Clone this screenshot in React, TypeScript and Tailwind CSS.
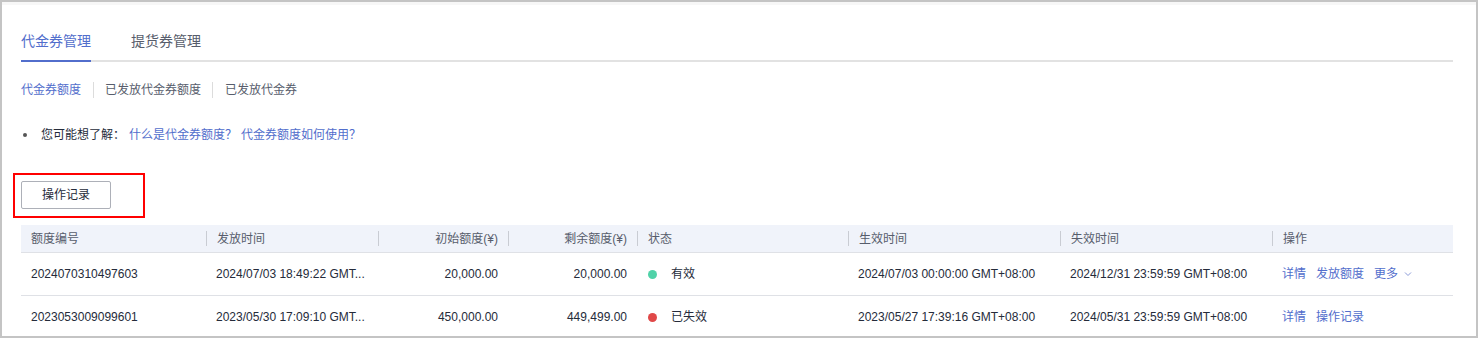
import React from "react";

type Row = {
  id: string;
  issued: string;
  initial: string;
  remain: string;
  status: "ok" | "expired";
  start: string;
  end: string;
  actions: string[];
  more?: boolean;
};

const rows: Row[] = [
  {
    id: "2024070310497603",
    issued: "2024/07/03 18:49:22 GMT...",
    initial: "20,000.00",
    remain: "20,000.00",
    status: "ok",
    start: "2024/07/03 00:00:00 GMT+08:00",
    end: "2024/12/31 23:59:59 GMT+08:00",
    actions: ["详情", "发放额度"],
    more: true,
  },
  {
    id: "2023053009099601",
    issued: "2023/05/30 17:09:10 GMT...",
    initial: "450,000.00",
    remain: "449,499.00",
    status: "expired",
    start: "2023/05/27 17:39:16 GMT+08:00",
    end: "2024/05/31 23:59:59 GMT+08:00",
    actions: ["详情", "操作记录"],
  },
];

// column widths in px, last one takes the rest
const cols = "grid-cols-[185px_172px_130px_129px_211px_212px_212px_1fr]";

function HeadCell({ children, right, sep = true }: { children: React.ReactNode; right?: boolean; sep?: boolean }) {
  return (
    <div className={`flex items-center h-full px-[10px] ${right ? "justify-end" : ""}`}>
      {sep && <span className="w-px h-[15px] bg-[#c9ccd3] -ml-[10px] mr-[10px] shrink-0" />}
      <span className={right ? "ml-auto" : ""}>{children}</span>
    </div>
  );
}

export default function App() {
  return (
    <div
      className="w-[1478px] h-[338px] bg-[#c4c4c4] p-[2px] overflow-hidden"
      style={{ fontFamily: '"Liberation Sans", "Noto Sans CJK SC", sans-serif' }}
    >
      <div className="bg-white h-full border-t-[3px] border-[#f7f7f7] pl-[19px] pr-[23px] text-[12px] text-[#333]">
        {/* main tabs */}
        <div className="flex gap-[40px] border-b-2 border-[#e2e2e2] pt-[26px] h-[57px]">
          <div className="relative text-[14px] text-[#526ecc] h-full">
            代金券管理
            <span className="absolute left-0 right-0 -bottom-[2px] h-[2px] bg-[#526ecc]" />
          </div>
          <div className="text-[14px] text-[#575d6c]">提货券管理</div>
        </div>

        {/* sub tabs */}
        <div className="flex items-center mt-[19px] h-[18px]">
          <span className="text-[#526ecc]">代金券额度</span>
          <span className="w-px h-[16px] bg-[#dcdcdc] ml-[12px] mr-[11px]" />
          <span className="text-[#575d6c]">已发放代金券额度</span>
          <span className="w-px h-[16px] bg-[#dcdcdc] ml-[11px] mr-[12px]" />
          <span className="text-[#575d6c]">已发放代金券</span>
        </div>

        {/* tips */}
        <div className="flex items-center mt-[27px] h-[18px]">
          <span className="w-[4px] h-[4px] rounded-full bg-[#555] ml-[2px] mr-[14px]" />
          <span className="text-[#252b3a]">您可能想了解：</span>
          <span className="text-[#526ecc] ml-[4px]">什么是代金券额度？</span>
          <span className="text-[#526ecc] ml-[4px]">代金券额度如何使用？</span>
        </div>

        {/* action button, red annotation box over it */}
        <div className="mt-[37px] relative w-[90px]">
          <button className="w-[90px] h-[28px] border border-[#adb0b8] rounded-[2px] bg-white text-[#252b3a]">
            操作记录
          </button>
          <div className="absolute -left-[8px] -top-[8px] w-[132px] h-[45px] border-2 border-[#ff0000]" />
        </div>

        {/* table */}
        <div className="mt-[16px]">
          <div className={`grid ${cols} h-[28px] bg-[#f0f3fa] border-b border-[#dfe1e6] text-[#575d6c]`}>
            <HeadCell sep={false}>额度编号</HeadCell>
            <HeadCell>发放时间</HeadCell>
            <HeadCell right>初始额度(¥)</HeadCell>
            <HeadCell right>剩余额度(¥)</HeadCell>
            <HeadCell>状态</HeadCell>
            <HeadCell>生效时间</HeadCell>
            <HeadCell>失效时间</HeadCell>
            <HeadCell>操作</HeadCell>
          </div>
          {rows.map((r) => (
            <div key={r.id} className={`grid ${cols} h-[43px] items-center border-b border-[#dfe1e6] text-[#252b3a]`}>
              <div className="px-[10px]">{r.id}</div>
              <div className="px-[10px] whitespace-nowrap">{r.issued}</div>
              <div className="px-[10px] text-right">{r.initial}</div>
              <div className="px-[10px] text-right">{r.remain}</div>
              <div className="px-[10px] flex items-center">
                <span
                  className={`w-[9px] h-[9px] rounded-full ml-[1px] mr-[14px] ${
                    r.status === "ok" ? "bg-[#50d2a8]" : "bg-[#e04848]"
                  }`}
                />
                {r.status === "ok" ? "有效" : "已失效"}
              </div>
              <div className="px-[10px] whitespace-nowrap">{r.start}</div>
              <div className="px-[10px] whitespace-nowrap">{r.end}</div>
              <div className="px-[10px] flex items-center gap-[10px] text-[#526ecc] whitespace-nowrap">
                {r.actions.map((a) => (
                  <span key={a}>{a}</span>
                ))}
                {r.more && (
                  <span className="flex items-center">
                    更多
                    <svg width="10" height="10" viewBox="0 0 10 10" className="ml-[5px]">
                      <path d="M2 3.5 L5 6.5 L8 3.5" fill="none" stroke="#8a9ad8" strokeWidth="1" />
                    </svg>
                  </span>
                )}
              </div>
            </div>
          ))}
        </div>
      </div>
    </div>
  );
}
